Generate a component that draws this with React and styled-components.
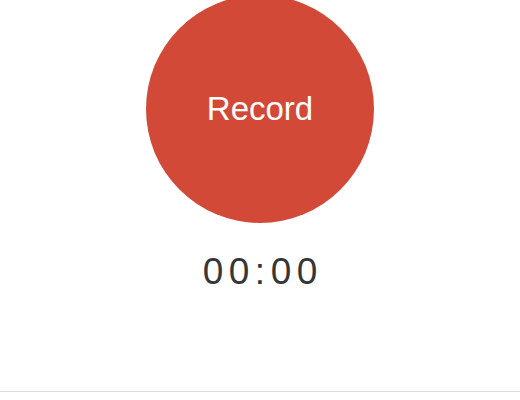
import React from "react";
import styled, { createGlobalStyle } from "styled-components";

const GlobalStyle = createGlobalStyle`
  html, body {
    margin: 0;
    padding: 0;
    background: #ffffff;
    overflow: hidden;
  }
`;

const Screen = styled.div`
  height: 400px;
  display: flex;
  flex-direction: column;
  font-family: "Liberation Sans", Arial, sans-serif;
`;

const Main = styled.main`
  flex: 1;
  display: flex;
  flex-direction: column;
  align-items: center;
`;

const RecordButton = styled.button`
  width: 228px;
  height: 228px;
  margin-top: -5px;
  border: none;
  border-radius: 50%;
  background: #d24a37;
  color: #ffffff;
  font-family: inherit;
  font-size: 33px;
  padding: 0;
  cursor: pointer;
`;

const Timer = styled.div`
  margin-top: 29px;
  padding-left: 5.5px;
  font-size: 37px;
  letter-spacing: 5.5px;
  color: #363636;
  line-height: 40px;
`;

const TabBar = styled.footer`
  height: 8px;
  border-top: 1px solid #dcdcdc;
  box-shadow: 0 1px 2px rgba(0, 0, 0, 0.04);
`;

const App = () => (
  <>
    <GlobalStyle />
    <Screen>
      <Main>
        <RecordButton type="button">Record</RecordButton>
        <Timer>00:00</Timer>
      </Main>
      <TabBar />
    </Screen>
  </>
);

export default App;
